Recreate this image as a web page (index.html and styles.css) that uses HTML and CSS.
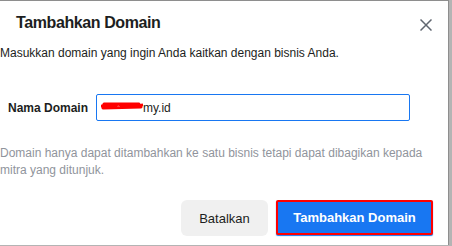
FILE: index.html
```html
<!DOCTYPE html>
<html lang="id">
<head>
  <meta charset="UTF-8" />
  <title>Tambahkan Domain</title>
  <link rel="stylesheet" href="styles.css">
</head>
<body>
  <div class="dialog">
    <div class="header">
      <h1 class="judul">Tambahkan Domain</h1>
      <svg class="tutup" width="12" height="12" viewBox="0 0 12 12">
        <path d="M0.5 0.5 L11.5 11.5 M11.5 0.5 L0.5 11.5" stroke="#606770" stroke-width="1.5" fill="none" />
      </svg>
    </div>

    <p class="deskripsi">Masukkan domain yang ingin Anda kaitkan dengan bisnis Anda.</p>

    <div class="baris">
      <label class="label">Nama Domain</label>
      <div class="input">
        <svg class="coretan" width="42" height="12" viewBox="0 0 42 12">
          <path d="M1 6 C6 3 10 9 15 5 C19 2 23 9 28 5 C32 2 36 8 41 5 M2 8 L40 7 M3 4 L38 4" stroke="#ff0000" stroke-width="3" fill="none" stroke-linecap="round" />
        </svg><span>my.id</span>
      </div>
    </div>

    <p class="bantuan">Domain hanya dapat ditambahkan ke satu bisnis tetapi dapat dibagikan kepada mitra yang ditunjuk.</p>

    <div class="footer">
      <button class="tombol batal">Batalkan</button>
      <button class="tombol tambah">Tambahkan Domain</button>
    </div>
  </div>
</body>
</html>
```

FILE: styles.css
```css
body {
  margin: 0;
  background: #b4b4b4;
  font-family: 'Liberation Sans', Arial, sans-serif;
  color: #1c1e21;
  height: 246px;
  overflow: hidden;
}

.dialog {
  width: 449px;
  height: 245px;
  background: #fff;
  border-top: 1px solid #8e8e8e;
  border-right: 1px solid #8e8e8e;
  box-sizing: border-box;
}

.header {
  display: flex;
  justify-content: space-between;
  align-items: center;
  padding: 7px 16px 0 16px;
  height: 30px;
}

.judul {
  margin: 0;
  font-size: 16px;
  line-height: 20px;
  font-weight: bold;
  letter-spacing: -0.4px;
}

.tutup {
  margin-top: 3px;
}

.deskripsi {
  margin: 8px 0 0 0;
  font-size: 12px;
  line-height: 15px;
}

.baris {
  display: flex;
  align-items: center;
  margin-top: 33px;
  padding-left: 8px;
}

.label {
  width: 88px;
  font-size: 12px;
  font-weight: bold;
}

.input {
  width: 314px;
  height: 27px;
  box-sizing: border-box;
  border: 1px solid #1877f2;
  border-radius: 2px;
  display: flex;
  align-items: center;
  padding-left: 4px;
  font-size: 12px;
}

.coretan {
  margin-top: -4px;
}

.bantuan {
  margin: 24px 0 0 0;
  width: 432px;
  font-size: 12px;
  line-height: 17px;
  color: #90949c;
}

.footer {
  display: flex;
  justify-content: flex-end;
  gap: 8px;
  margin-top: 21px;
  padding-right: 15px;
}

.tombol {
  font-family: 'Liberation Sans', Arial, sans-serif;
  font-size: 13px;
  height: 36px;
  border-radius: 6px;
  cursor: pointer;
}

.batal {
  width: 87px;
  border: none;
  background: #f0f0f0;
  color: #1c1e21;
}

.tambah {
  width: 157px;
  height: 35px;
  border: 2px solid #ff0000;
  border-radius: 2px;
  background: #1877f2;
  color: #fff;
  font-weight: bold;
  box-shadow: 0 1px 1px #1877f2;
}
```
